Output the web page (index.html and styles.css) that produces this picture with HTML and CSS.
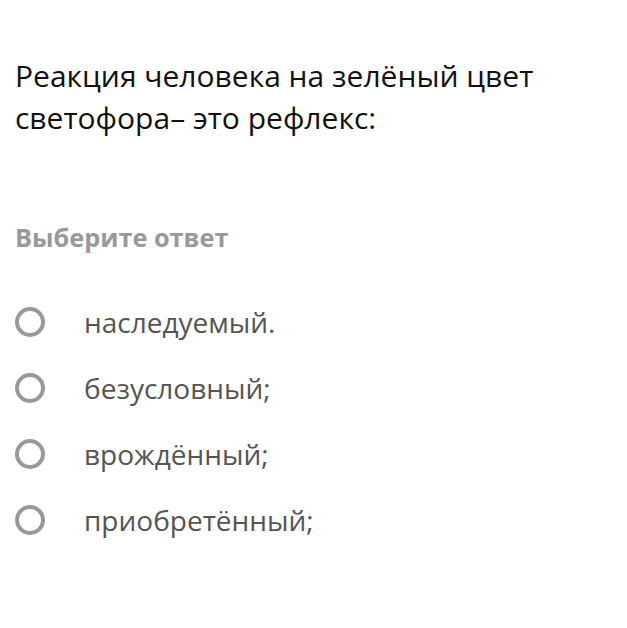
FILE: index.html
```html
<!DOCTYPE html>
<html lang="ru">
<head>
<meta charset="utf-8">
<link rel="stylesheet" href="styles.css">
</head>
<body>
<div class="page">
  <h1 class="question">Реакция человека на зелёный цвет светофора– это рефлекс:</h1>
  <div class="prompt">Выберите ответ</div>
  <ul class="options">
    <li class="option"><span class="radio"></span><span class="label">наследуемый.</span></li>
    <li class="option"><span class="radio"></span><span class="label">безусловный;</span></li>
    <li class="option"><span class="radio"></span><span class="label">врождённый;</span></li>
    <li class="option"><span class="radio"></span><span class="label">приобретённый;</span></li>
  </ul>
</div>
</body>
</html>
```

FILE: styles.css
```css
html, body {
  margin: 0;
  padding: 0;
  background: #fff;
}
.page {
  font-family: "Open Sans", "DejaVu Sans", sans-serif;
  padding: 55px 15px 0 15px;
}
.question {
  margin: 0;
  font-size: 30px;
  font-weight: 400;
  line-height: 42px;
  color: #111;
  width: 580px;
}
.prompt {
  margin-top: 83px;
  font-size: 25.3px;
  font-weight: 700;
  line-height: 30px;
  color: #999;
}
.options {
  list-style: none;
  margin: 52px 0 0 0;
  padding: 0;
  display: flex;
  flex-direction: column;
  gap: 30px;
}
.option {
  display: flex;
  align-items: center;
  height: 36px;
}
.radio {
  box-sizing: border-box;
  width: 30px;
  height: 30px;
  margin-top: -1px;
  border: 4px solid #999;
  border-radius: 50%;
  flex: none;
}
.label {
  margin-left: 39px;
  font-size: 28px;
  line-height: 36px;
  color: #555;
}
```
